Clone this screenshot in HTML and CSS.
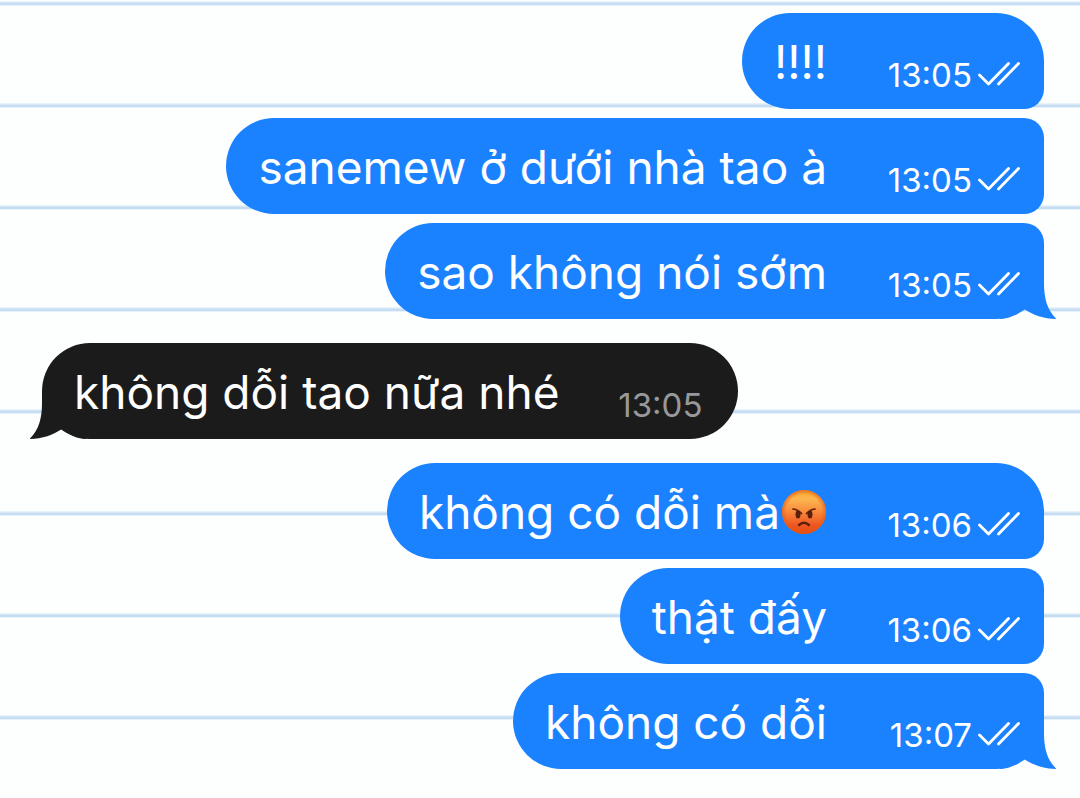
FILE: index.html
```
<!DOCTYPE html>
<html lang="vi">
<head>
    <meta charset="UTF-8">
    <meta name="viewport" content="width=device-width, initial-scale=1.0">
    <title>Chat</title>
    <link rel="stylesheet" href="styles.css">
</head>
<body>

<!-- Shared shapes -->
<svg class="sprite" aria-hidden="true">
    <symbol id="checks" viewBox="0 0 42 24">
        <path d="M1.5 13 L10.5 22 L30.5 1.5 M20.5 22 L40.5 1.5" fill="none" stroke="#fff" stroke-width="2.8" stroke-linecap="round" stroke-linejoin="round"/>
    </symbol>
    <symbol id="tail" viewBox="0 0 56 48">
        <path d="M0 0 H44 V12 C44 27 47 39 56.5 48 C44 48 33 44 24 38 C17 44 8 48 0 48 Z" fill="currentColor"/>
    </symbol>
</svg>

<main class="chat">
    <section class="group sent">
        <div class="bubble">
            <p class="text">!!!!</p>
            <div class="meta"><time>13:05</time><svg class="checks"><use href="#checks"/></svg></div>
        </div>
        <div class="bubble">
            <p class="text">sanemew ở dưới nhà tao à</p>
            <div class="meta"><time>13:05</time><svg class="checks"><use href="#checks"/></svg></div>
        </div>
        <div class="bubble">
            <svg class="tail"><use href="#tail"/></svg>
            <p class="text">sao không nói sớm</p>
            <div class="meta"><time>13:05</time><svg class="checks"><use href="#checks"/></svg></div>
        </div>
    </section>

    <section class="group received">
        <div class="bubble">
            <svg class="tail"><use href="#tail"/></svg>
            <p class="text">không dỗi tao nữa nhé</p>
            <div class="meta"><time>13:05</time></div>
        </div>
    </section>

    <section class="group sent">
        <div class="bubble">
            <p class="text">không có dỗi mà<svg class="emoji" viewBox="0 0 44 44" role="img" aria-label="angry face">
                <defs>
                    <linearGradient id="face" x1="0" y1="0" x2="0" y2="1">
                        <stop offset="0" stop-color="#f5a52c"/>
                        <stop offset="0.2" stop-color="#fdb650"/>
                        <stop offset="0.5" stop-color="#f8893a"/>
                        <stop offset="0.8" stop-color="#ee5722"/>
                        <stop offset="1" stop-color="#e8480e"/>
                    </linearGradient>
                    <radialGradient id="edge">
                        <stop offset="0.8" stop-color="#e85a10" stop-opacity="0"/>
                        <stop offset="1" stop-color="#e85a10" stop-opacity="0.7"/>
                    </radialGradient>
                </defs>
                <circle cx="22" cy="22" r="22" fill="url(#face)"/>
                <circle cx="22" cy="22" r="22" fill="url(#edge)"/>
                <g fill="#5c1f0a">
                    <ellipse cx="16" cy="24.5" rx="2.5" ry="4"/>
                    <ellipse cx="28" cy="24.5" rx="2.5" ry="4"/>
                </g>
                <g fill="none" stroke="#5c1f0a" stroke-width="1.7" stroke-linecap="round">
                    <path d="M11 19 Q16 19.5 19.5 23.5"/>
                    <path d="M33 19 Q28 19.5 24.5 23.5"/>
                    <path d="M17 35 Q22 30.5 27 35" stroke-width="2.4"/>
                </g>
            </svg></p>
            <div class="meta"><time>13:06</time><svg class="checks"><use href="#checks"/></svg></div>
        </div>
        <div class="bubble">
            <p class="text">thật đấy</p>
            <div class="meta"><time>13:06</time><svg class="checks"><use href="#checks"/></svg></div>
        </div>
        <div class="bubble">
            <svg class="tail"><use href="#tail"/></svg>
            <p class="text">không có dỗi</p>
            <div class="meta"><time>13:07</time><svg class="checks"><use href="#checks"/></svg></div>
        </div>
    </section>
</main>

</body>
</html>
```
FILE: styles.css
```
* {
    margin: 0;
    padding: 0;
    box-sizing: border-box;
}

/* Ruled paper */
body {
    font-family: Inter, "Noto Sans", sans-serif;
    background: #fdfffe repeating-linear-gradient(to bottom, #e6f3fc 0 1px, #c6dcf0 2px 4px, #e6f3fc 4px 5px, #fdfffe 5px 102px);
    background-position: 0 1px;
    min-height: 100vh;
}

.sprite {
    position: absolute;
    width: 0;
    height: 0;
}

.chat {
    display: flex;
    flex-direction: column;
    gap: 24px;
    padding: 13px 36px 24px 42px;
}

.group {
    display: flex;
    flex-direction: column;
    gap: 9px;
}

.sent {
    align-items: flex-end;
}

.received {
    align-items: flex-start;
}

/* isolation keeps the tail between the bubble fill and its text */
.bubble {
    position: relative;
    isolation: isolate;
    display: flex;
    align-items: flex-end;
    justify-content: space-between;
    min-height: 96px;
    padding: 17px 24px 17px 32px;
    border-radius: 48px;
}

.sent .bubble {
    background: #1b82ff;
    color: #fff;
    border-radius: 48px 20px 20px 48px;
}

.sent .bubble:first-child {
    border-top-right-radius: 48px;
}

.sent .bubble:last-child {
    border-bottom-right-radius: 48px;
}

.received .bubble {
    background: #1b1b1b;
    color: #fff;
    padding-right: 36px;
}

.text {
    font-size: 46px;
    line-height: 60px;
}

.meta {
    display: flex;
    align-items: center;
    justify-content: flex-end;
    gap: 6px;
    min-width: 193px;
    font-size: 33px;
    line-height: 34px;
}

.received .meta {
    min-width: 143px;
    color: #98989b;
}

.checks {
    width: 42px;
    height: 24px;
    margin-bottom: 2px;
}

.emoji {
    width: 44px;
    height: 44px;
    margin: 0 1px 0 2px;
    vertical-align: -5px;
}

/* Tail at the bottom corner of the last bubble */
.tail {
    position: absolute;
    z-index: -1;
    right: -12px;
    bottom: 0;
    width: 56px;
    height: 48px;
    color: #1b82ff;
}

.received .tail {
    right: auto;
    left: -12px;
    color: #1b1b1b;
    transform: scaleX(-1);
}
```
